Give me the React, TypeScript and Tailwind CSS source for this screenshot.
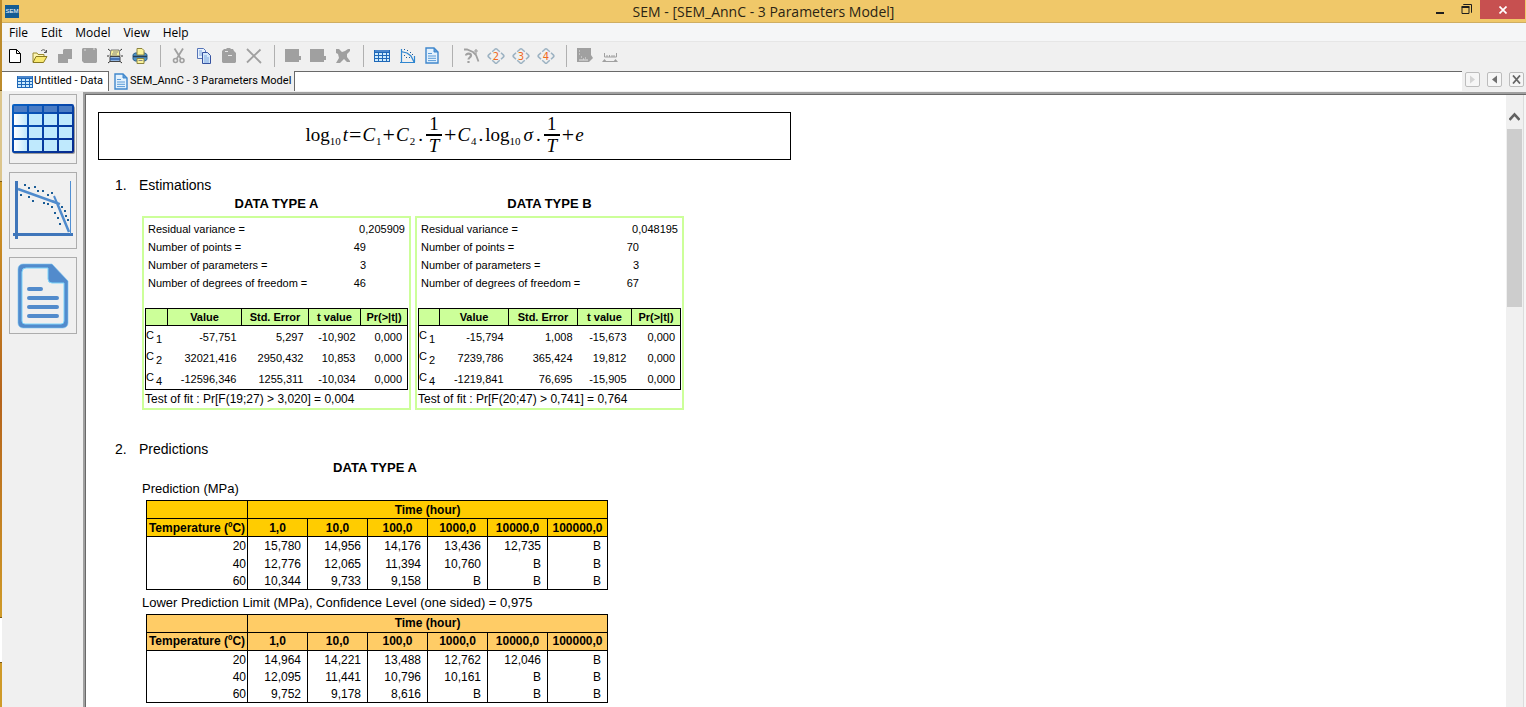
import type { ReactNode } from "react";

const GRAY = "#a0a0a0";

function Svg({ children, size = 18 }: { children: ReactNode; size?: number }) {
  return (
    <svg width={size} height={size} viewBox="0 0 18 18" fill="none" aria-hidden="true">
      {children}
    </svg>
  );
}

function GridIcon() {
  return (
    <svg width="16" height="12" viewBox="0 0 16 12" aria-hidden="true">
      <rect width="16" height="12" fill="#1f68b8" />
      <rect x="1" y="0" width="14" height="2" fill="#4a86cc" />
      {[1, 5, 9, 13].map((x) =>
        [3, 6, 9].map((y) => <rect key={`${x}-${y}`} x={x} y={y} width={x === 13 ? 2 : 3} height="2" fill="#cdeafc" />),
      )}
    </svg>
  );
}

function SheetIcon() {
  return (
    <svg width="14" height="17" viewBox="0 0 14 17" fill="none" aria-hidden="true">
      <path d="M1 1h8l4 4v11H1z" fill="#e4f2fd" stroke="#3f87cc" strokeWidth="1.4" />
      <path d="M9 1v4h4z" fill="#5b9bd8" stroke="#3f87cc" />
      <path d="M3 6.5h4M3 9h8M3 11.3h8M3 13.6h8" stroke="#5b9bd8" />
    </svg>
  );
}

function CurveIcon() {
  return (
    <Svg>
      <path d="M3.5 2v14M2 15.500h15M3 4.500l6 1.500 4 3 3 6M16.500 15V9" stroke="#2f86d0" strokeWidth="1.200" />
      <path d="M6 2.500h1M9 3.500h1M12 5.500h1M6 8.500h1M8 10.500h1M14 7.500h1M11 10.500h1" stroke="#1c5c9c" />
    </Svg>
  );
}

function DiamondIcon({ n }: { n: number }) {
  return (
    <Svg>
      <path
        d="M5.200 4.800 8 2.200q1-.8 2 0l2.800 2.600M14 5.800l2.500 2.300q.8.900 0 1.800L14 12.200M12.800 13.200 10 15.800q-1 .8-2 0l-2.800-2.600M4 12.200 1.500 9.900q-.8-.9 0-1.800L4 5.800"
        stroke="#9cb2c2"
        strokeWidth="1.500"
      />
      <text x="9" y="12.500" textAnchor="middle" className="font-['DejaVu_Sans'] text-[10px]" fill="#f06a20">
        {n}
      </text>
    </Svg>
  );
}

const newIcon = (
  <Svg>
    <path d="M3.500 2.500h7l4 4v9h-11z" fill="#fff" stroke="#000" />
    <path d="M10.500 2.500v4h4" stroke="#000" />
  </Svg>
);
const openIcon = (
  <Svg>
    <path d="M2 15V6h4l1 1.500h6V9" fill="#fdf6b4" stroke="#9a8a30" />
    <path d="M2 15.500 5 9.500h11l-3.500 6z" fill="#f8e870" stroke="#8a7a20" />
    <path d="M10 4c2-2 4-1.500 5 1m.5-2v2.500H13" stroke="#555" />
  </Svg>
);
const saveIcon = (
  <Svg>
    <path d="M8 2h8v10h-4v4H2V7h5V3z" fill={GRAY} />
  </Svg>
);
const saveAllIcon = (
  <Svg>
    <path d="M2 1h13l1 1v13l-1 1H3l-2-2V2z" fill={GRAY} />
    <path d="M3 3h2M12 2h2" stroke="#ddd" />
  </Svg>
);
const previewIcon = (
  <Svg>
    <path d="m2 2 2.500 2M16 2l-2.500 2M1 9h2M15 9h2M2 16l2.500-2M16 16l-2.500-2" stroke="#333" />
    <path d="M5 3h8l1 6H4z" fill="#fbf39a" stroke="#777" />
    <path d="M7 5h5M6 7h5" stroke="#888" />
    <path d="M4 9.500h10v5H4z" fill="#8fb4e0" stroke="#444" />
    <path d="M4 12h10" stroke="#2f5fa8" strokeWidth="1.500" />
  </Svg>
);
const printIcon = (
  <Svg>
    <path d="M2 7.500 4 6h10l2 1.500v5L14 14H4l-2-1.500z" fill="#4f94c8" stroke="#2a6088" />
    <path d="M6 1.500h5l2 2V8H6z" fill="#fbf39a" stroke="#8c8440" />
    <path d="M2 9.500h14" stroke="#263f58" strokeWidth="1.500" />
    <path d="M6 11.500h7v5H6z" fill="#fbf39a" stroke="#8c8440" />
    <path d="M7.500 13.500h4" stroke="#888" />
  </Svg>
);
const cutIcon = (
  <Svg>
    <path d="M4.500 1.500 11 12M13 1.500 6.500 12" stroke="#a0a0a0" strokeWidth="1.800" />
    <circle cx="5.500" cy="13.500" r="2" stroke="#a0a0a0" strokeWidth="1.600" />
    <circle cx="12" cy="13.500" r="2" stroke="#a0a0a0" strokeWidth="1.600" />
  </Svg>
);
const copyIcon = (
  <Svg>
    <path d="M2.500 1.500h6l2 2v8h-8z" fill="#e8f2fd" stroke="#5674b8" />
    <path d="M4 4h3M4 6h3M4 8h3" stroke="#7fa8e0" />
    <path d="M7.500 5.500h5l3 3v8h-8z" fill="#d4e8fb" stroke="#3552a0" />
    <path d="M9 9h3M9 11h5M9 13h5M9 15h5" stroke="#7fa8e0" />
  </Svg>
);
const pasteIcon = (
  <Svg>
    <path d="M4 2h2l1-1h3l1 1h2l1 2 2 2v9l-1 1H3l-1-1V4z" fill={GRAY} />
    <path d="M5 4.500h3M8 8.500h4" stroke="#e8e8e8" />
  </Svg>
);
const deleteIcon = (
  <Svg>
    <path d="m2 2 14 14M15.500 2.500 2 15.500" stroke="#a0a0a0" strokeWidth="1.800" />
  </Svg>
);
const blockIcon = (
  <Svg>
    <path d="M1 2h14v7h2v4h-2v2H1z" fill={GRAY} />
  </Svg>
);
const blockXIcon = (
  <Svg>
    <path d="M2 2h3l3 3 3-1 3-2h2v2l-3 3v3l3 4v1h-3l-3-3-4 4H2l3-5-1-4-2-1z" fill={GRAY} />
  </Svg>
);
const helpCurveIcon = (
  <Svg>
    <path d="M2 2.500h3l6 2.500 3 3 2.500 6.500" stroke={GRAY} strokeWidth="1.800" />
    <path d="M12 4h4M14 2v5" stroke={GRAY} strokeWidth="1.200" />
    <path d="M4 8.500c0-2.500 5-2.500 5 0 0 2-2.500 2-2.500 4M6.500 14v2" stroke={GRAY} strokeWidth="2.200" />
  </Svg>
);
const exportIcon = (
  <Svg>
    <path d="M1 1h14v7l2 3-4 4H1z" fill={GRAY} />
    <path d="M3 4h1M3 7h1M5 10h1M3 13h9M7 12h1M9 11h1" stroke="#e4e4e4" />
  </Svg>
);
const rulerIcon = (
  <Svg>
    <path d="M3.500 6v4h12V6M6 8v2M8.500 8v2M11 8v2M13 8v2" stroke={GRAY} />
    <path d="m1 15 2.500-3L6 15zM12 15l2.500-3 2.500 3z" fill={GRAY} />
    <path d="M4 14.500h10" stroke={GRAY} />
  </Svg>
);

type Tool = { label: string; icon: ReactNode };
const toolGroups: Tool[][] = [
  [
    { label: "New", icon: newIcon },
    { label: "Open", icon: openIcon },
    { label: "Save", icon: saveIcon },
    { label: "Save all", icon: saveAllIcon },
    { label: "Print preview", icon: previewIcon },
    { label: "Print", icon: printIcon },
  ],
  [
    { label: "Cut", icon: cutIcon },
    { label: "Copy", icon: copyIcon },
    { label: "Paste", icon: pasteIcon },
    { label: "Delete", icon: deleteIcon },
  ],
  [
    { label: "Insert row", icon: blockIcon },
    { label: "Insert column", icon: blockIcon },
    { label: "Remove", icon: blockXIcon },
  ],
  [
    { label: "Data", icon: <GridIcon /> },
    { label: "Graph", icon: <CurveIcon /> },
    { label: "Report", icon: <SheetIcon /> },
  ],
  [
    { label: "Choose model", icon: helpCurveIcon },
    { label: "2 parameters", icon: <DiamondIcon n={2} /> },
    { label: "3 parameters", icon: <DiamondIcon n={3} /> },
    { label: "4 parameters", icon: <DiamondIcon n={4} /> },
  ],
  [
    { label: "Export", icon: exportIcon },
    { label: "Scale", icon: rulerIcon },
  ],
];

function TitleBar() {
  return (
    <header className="grid h-[23px] shrink-0 grid-cols-[1fr_auto_1fr] border-b border-[#cfae62] bg-[#f0c869] pr-px">
      <div className="pt-[5px] pl-[3px]">
        <span className="block h-[13px] w-[14px] overflow-hidden bg-[#135c94] text-center font-['Liberation_Sans'] text-[6px] leading-[12px] text-white">
          SEM
        </span>
      </div>
      <h1 className="font-['Open_Sans',sans-serif] text-[14px] leading-[23px] text-[#2a2414]">
        SEM - [SEM_AnnC - 3 Parameters Model]
      </h1>
      <div className="flex items-start justify-end">
        <button aria-label="Minimize" className="flex h-[19px] w-[27px] items-center justify-center">
          <svg width="10" height="12" viewBox="0 0 10 12">
            <rect x="1" y="8" width="8" height="2" fill="#1e1e1e" />
          </svg>
        </button>
        <button aria-label="Restore" className="flex h-[19px] w-[27px] items-center justify-center">
          <svg width="11" height="11" viewBox="0 0 11 11" fill="none" stroke="#1e1e1e">
            <path d="M1 3.500h7v6H1z" />
            <path d="M.5 3h8" strokeWidth="2" />
            <path d="M2.500 1V.5h8v8H10" />
          </svg>
        </button>
        <button aria-label="Close" className="flex h-[19px] w-[45px] items-center justify-center bg-[#c75050]">
          <svg width="8" height="8" viewBox="0 0 8 8" stroke="#fff" strokeWidth="1.700">
            <path d="m.5.5 7 7M7.500.5l-7 7" />
          </svg>
        </button>
      </div>
    </header>
  );
}

function MenuBar() {
  return (
    <nav className="flex h-[19px] shrink-0 items-center gap-[13px] border-b border-[#e6e6e6] bg-[#f5f6f7] pt-px pl-[7px] font-['Open_Sans',sans-serif] text-[12px] text-black">
      {["File", "Edit", "Model", "View", "Help"].map((m) => (
        <button key={m}>{m}</button>
      ))}
    </nav>
  );
}

function ToolBar() {
  return (
    <div role="toolbar" className="flex h-[29px] shrink-0 items-center pb-[2px]">
      {toolGroups.map((group, i) => (
        <div key={i} className="flex items-center">
          {i > 0 && <span className="mr-[5px] ml-2 h-[22px] w-px bg-[#b0b0b0]" />}
          {group.map((t) => (
            <button key={t.label} aria-label={t.label} className="flex h-6 w-[25px] items-center justify-center">
              {t.icon}
            </button>
          ))}
        </div>
      ))}
    </div>
  );
}

function TabButton({ label, children }: { label: string; children: ReactNode }) {
  return (
    <button
      aria-label={label}
      className="flex size-[15px] items-center justify-center rounded-xs border border-[#bcbcbc] bg-[#f6f6f6]"
    >
      <svg width="9" height="9" viewBox="0 0 9 9" fill="none">
        {children}
      </svg>
    </button>
  );
}

function TabStrip() {
  return (
    <div className="flex h-[21px] shrink-0 font-['Roboto',sans-serif] text-[11px] text-black">
      <button className="mb-px flex items-center gap-px border-t border-r border-[#696969] bg-white pr-[5px] pl-[15px] whitespace-nowrap">
        <GridIcon />
        Untitled - Data
      </button>
      <button className="mb-px flex items-center gap-[2px] border-r border-[#696969] pr-[3px] pl-[5px] whitespace-nowrap">
        <SheetIcon />
        SEM_AnnC - 3 Parameters Model
      </button>
      <div className="mb-px flex-1 border-t border-[#696969] bg-white" />
      <div className="flex gap-[7px] pt-px pr-[2px] pl-[3px]">
        <TabButton label="Next tab">
          <path d="m2 .5 5 4-5 4z" fill="#d4d4d4" />
        </TabButton>
        <TabButton label="Previous tab">
          <path d="m7 .5-5 4 5 4z" fill="#707070" />
        </TabButton>
        <TabButton label="Close tab">
          <path d="m1 .5 7 8M8 .5l-7 8" stroke="#666" strokeWidth="1.800" />
        </TabButton>
      </div>
    </div>
  );
}

function BigGrid() {
  return (
    <svg width="64" height="52" viewBox="0 0 64 52" aria-hidden="true">
      <defs>
        <linearGradient id="frame" x1="0" y1="0" x2="1" y2="1">
          <stop offset="0" stopColor="#0a62c4" />
          <stop offset="1" stopColor="#04268c" />
        </linearGradient>
        <linearGradient id="cell" x1="0" y1="0" x2="1" y2="0">
          <stop offset="0" stopColor="#fff" />
          <stop offset="1" stopColor="#bfe9fd" />
        </linearGradient>
      </defs>
      <rect x="2" y="3" width="62" height="48" rx="2" fill="#9a9a9a" />
      <rect x="1" y="1" width="62" height="49" rx="2" fill="url(#frame)" />
      {[3, 18, 33, 48].map((x, c) => (
        <g key={x}>
          <rect x={x} y="3" width="13" height="6" fill="#4a7cc4" />
          {[11, 24, 37].map((y) => (
            <rect key={y} x={x} y={y} width="13" height="11" fill={c === 0 ? "url(#cell)" : "#bfe9fd"} />
          ))}
        </g>
      ))}
    </svg>
  );
}

function BigCurve() {
  const dots = [
    [11, 3], [15, 6], [21, 5], [24, 9], [29, 9], [7, 13], [15, 15], [19, 19], [34, 13], [38, 11], [30, 21], [34, 22],
    [38, 25], [48, 25], [51, 29], [41, 31], [52, 34], [44, 36], [54, 38], [46, 42],
  ];
  return (
    <svg width="60" height="60" viewBox="0 0 60 60" fill="none" aria-hidden="true">
      <path d="M3.500 0v58" stroke="#3f76ba" strokeWidth="3" />
      <path d="M0 53.500h60" stroke="#3f76ba" strokeWidth="3" />
      <path d="M57.500 0v53" stroke="#4f8fd4" />
      <path d="M5 8 44 22 56 51" stroke="#4f8bcd" strokeWidth="2.500" />
      <path d="M41 15l3 7M39 20l8 3" stroke="#4f8bcd" strokeWidth="2" />
      {dots.map(([x, y]) => (
        <rect key={`${x}-${y}`} x={x} y={y} width="2" height="2" fill="#1a5c96" />
      ))}
    </svg>
  );
}

function BigSheet() {
  return (
    <svg width="52" height="66" viewBox="0 0 52 66" fill="none" aria-hidden="true">
      <path d="M6 1h29l16 17v42a5 5 0 0 1-5 5H6a5 5 0 0 1-5-5V6a5 5 0 0 1 5-5z" fill="#528bcc" stroke="#7cc6f4" strokeWidth=".6" />
      <path d="M9 5h22v11a4 4 0 0 0 4 4h12v38a3 3 0 0 1-3 3H8a3 3 0 0 1-3-3V9a4 4 0 0 1 4-4z" fill="#efefef" stroke="#7cd4fb" />
      <path d="M12 26h12M12 35h28M12 44h28M12 53h28" stroke="#528bcc" strokeWidth="4" strokeLinecap="round" />
    </svg>
  );
}

function SideBar() {
  const base = "flex w-[68px] items-center justify-center border border-[#adadad]";
  return (
    <aside className="flex w-[81px] shrink-0 flex-col gap-2 pt-[2px] pl-[7px]">
      <button aria-label="Data view" className={`${base} h-[70px]`}>
        <BigGrid />
      </button>
      <button aria-label="Graph view" className={`${base} h-[77px]`}>
        <BigCurve />
      </button>
      <button aria-label="Report view" className={`${base} h-[77px]`}>
        <BigSheet />
      </button>
    </aside>
  );
}

function Sub({ children }: { children: ReactNode }) {
  return <span className="mt-3 text-[11px] leading-3">{children}</span>;
}

function Op({ children }: { children: ReactNode }) {
  return <span className="mx-px text-[22px]">{children}</span>;
}

function Symbol({ children }: { children: ReactNode }) {
  return <i className="mr-px">{children}</i>;
}

function Fraction() {
  return (
    <span className="mr-px ml-[3px] flex w-4 flex-col items-center">
      <span className="leading-5">1</span>
      <span className="h-[2px] w-full bg-black" />
      <span className="leading-5 italic">T</span>
    </span>
  );
}

function Equation() {
  return (
    <div className="flex h-12 w-[693px] items-center justify-center border border-black pb-[2px] font-['Liberation_Serif',serif] text-[19px] leading-5">
      <span>log</span>
      <Sub>10</Sub>
      <i className="ml-[2px]">t</i>
      <Op>=</Op>
      <Symbol>C</Symbol>
      <Sub>1</Sub>
      <Op>+</Op>
      <Symbol>C</Symbol>
      <Sub>2</Sub>
      <span className="ml-[3px]">.</span>
      <Fraction />
      <Op>+</Op>
      <Symbol>C</Symbol>
      <Sub>4</Sub>
      <span className="mx-[2px]">.</span>
      <span>log</span>
      <Sub>10</Sub>
      <i className="ml-[3px]">σ</i>
      <span className="ml-[3px]">.</span>
      <Fraction />
      <Op>+</Op>
      <i>e</i>
    </div>
  );
}

type Estimation = {
  name: string;
  summary: [string, string][];
  cols: string[];
  rows: string[][];
  test: string;
};

const estimations: Estimation[] = [
  {
    name: "DATA TYPE A",
    summary: [
      ["Residual variance =", "0,205909"],
      ["Number of points =", "49"],
      ["Number of parameters =", "3"],
      ["Number of degrees of freedom =", "46"],
    ],
    cols: ["w-[22px]", "w-[74px]", "w-[67px]", "w-[52px]", "w-[47px]"],
    rows: [
      ["1", "-57,751", "5,297", "-10,902", "0,000"],
      ["2", "32021,416", "2950,432", "10,853", "0,000"],
      ["4", "-12596,346", "1255,311", "-10,034", "0,000"],
    ],
    test: "Test of fit : Pr[F(19;27) > 3,020] = 0,004",
  },
  {
    name: "DATA TYPE B",
    summary: [
      ["Residual variance =", "0,048195"],
      ["Number of points =", "70"],
      ["Number of parameters =", "3"],
      ["Number of degrees of freedom =", "67"],
    ],
    cols: ["w-[21px]", "w-[69px]", "w-[69px]", "w-[54px]", "w-[49px]"],
    rows: [
      ["1", "-15,794", "1,008", "-15,673", "0,000"],
      ["2", "7239,786", "365,424", "19,812", "0,000"],
      ["4", "-1219,841", "76,695", "-15,905", "0,000"],
    ],
    test: "Test of fit : Pr[F(20;47) > 0,741] = 0,764",
  },
];

function EstimationCard({ data }: { data: Estimation }) {
  return (
    <section className="w-[269px]">
      <h3 className="mb-1 text-center text-[13px] leading-4 font-bold">{data.name}</h3>
      <div className="border-2 border-[#ccff99] pt-[2px] pr-[2px] pl-px text-[11px]">
        <table className="mb-4 w-full">
          <tbody>
            {data.summary.map(([label, value], i) => (
              <tr key={label} className="h-[18px]">
                <th scope="row" className="p-0 pl-[3px] text-left font-normal whitespace-nowrap">
                  {label}
                </th>
                <td className={i === 0 ? "p-0 pr-[2px] text-right" : "p-0 pr-[41px] text-right"}>{value}</td>
              </tr>
            ))}
          </tbody>
        </table>
        <table className="w-full table-fixed border-collapse border border-black">
          <colgroup>
            {data.cols.map((c, i) => (
              <col key={i} className={c} />
            ))}
          </colgroup>
          <thead>
            <tr className="h-[17px] bg-[#ccff99]">
              {["", "Value", "Std. Error", "t value", "Pr(>|t|)"].map((h, i) => (
                <th key={i} className="border border-black p-0 leading-4 whitespace-nowrap">
                  {h}
                </th>
              ))}
            </tr>
          </thead>
          <tbody>
            {data.rows.map(([n, ...values]) => (
              <tr key={n} className="h-[21px] first:h-[22px]">
                <th scope="row" className="p-0 font-normal">
                  <span className="flex gap-[2px] leading-3">
                    <span className="pb-1">C</span>
                    <span className="pt-1">{n}</span>
                  </span>
                </th>
                {values.map((v, i) => (
                  <td key={i} className="p-0 pt-px pr-[5px] text-right">
                    {v}
                  </td>
                ))}
              </tr>
            ))}
          </tbody>
        </table>
        <p className="text-[12px] leading-[18px]">{data.test}</p>
      </div>
    </section>
  );
}

const times = ["1,0", "10,0", "100,0", "1000,0", "10000,0", "100000,0"];

function PredictionTable({ title, tone, rows }: { title: string; tone: string; rows: string[][] }) {
  return (
    <div>
      <p className="pt-[5px] text-[13px] leading-4">{title}</p>
      <table className="mt-[3px] ml-1 w-[462px] table-fixed border-collapse border border-black text-[12px] leading-4">
        <colgroup>
          <col className="w-[101px]" />
          {times.map((t) => (
            <col key={t} className="w-[60px]" />
          ))}
        </colgroup>
        <thead className={tone}>
          <tr className="h-[18px]">
            <th className="border border-black p-0" />
            <th colSpan={6} className="border border-black p-0">
              Time (hour)
            </th>
          </tr>
          <tr className="h-[18px]">
            <th className="border border-black p-0 whitespace-nowrap">Temperature (ºC)</th>
            {times.map((t) => (
              <th key={t} className="border border-black p-0">
                {t}
              </th>
            ))}
          </tr>
        </thead>
        <tbody>
          {rows.map(([temp, ...values]) => (
            <tr key={temp} className="h-[17px] first:h-[18px]">
              <th scope="row" className="border-x border-black p-0 pt-px pr-px text-right font-normal">
                {temp}
              </th>
              {values.map((v, i) => (
                <td key={i} className="border-x border-black p-0 pt-px pr-[6px] text-right">
                  {v}
                </td>
              ))}
            </tr>
          ))}
        </tbody>
      </table>
    </div>
  );
}

function SectionTitle({ n, children }: { n: number; children: ReactNode }) {
  return (
    <h2 className="flex pl-[17px] text-[14px] leading-4">
      <span className="w-6">{n}.</span>
      {children}
    </h2>
  );
}

function Report() {
  return (
    <article className="flex-1 overflow-hidden bg-white pt-[17px] pl-3 font-['Liberation_Sans',sans-serif] text-black">
      <Equation />
      <div className="pt-[17px]">
        <SectionTitle n={1}>Estimations</SectionTitle>
        <div className="flex gap-1 pt-[3px] pl-11">
          {estimations.map((e) => (
            <EstimationCard key={e.name} data={e} />
          ))}
        </div>
      </div>
      <div className="pt-[31px]">
        <SectionTitle n={2}>Predictions</SectionTitle>
        <div className="w-[510px] pt-[3px] pl-11">
          <h3 className="text-center text-[13px] leading-4 font-bold">DATA TYPE A</h3>
          <PredictionTable
            title="Prediction (MPa)"
            tone="bg-[#ffcc00]"
            rows={[
              ["20", "15,780", "14,956", "14,176", "13,436", "12,735", "B"],
              ["40", "12,776", "12,065", "11,394", "10,760", "B", "B"],
              ["60", "10,344", "9,733", "9,158", "B", "B", "B"],
            ]}
          />
          <PredictionTable
            title="Lower Prediction Limit (MPa), Confidence Level (one sided) = 0,975"
            tone="bg-[#ffcc66]"
            rows={[
              ["20", "14,964", "14,221", "13,488", "12,762", "12,046", "B"],
              ["40", "12,095", "11,441", "10,796", "10,161", "B", "B"],
              ["60", "9,752", "9,178", "8,616", "B", "B", "B"],
            ]}
          />
        </div>
      </div>
    </article>
  );
}

function ScrollBar() {
  return (
    <div className="flex w-[17px] shrink-0 flex-col items-center bg-[#f0f0f0]">
      <button aria-label="Scroll up" className="flex h-[34px] w-full items-end justify-center pb-[7px]">
        <svg width="11" height="10" viewBox="0 0 11 10" fill="none" stroke="#606060" strokeWidth="2.600">
          <path d="m.5 8 5-5.500 5 5.500" />
        </svg>
      </button>
      <div className="h-[178px] w-[15px] bg-[#cdcdcd]" />
    </div>
  );
}

export default function App() {
  return (
    <div className="flex h-screen overflow-hidden bg-[#f0f0f0]">
      <div className="flex w-[2px] shrink-0 flex-col">
        <div className="h-[90px] bg-[#bd8c2c]" />
        <div className="h-[92px] border-y border-[#7a5a18] bg-[#dcc58c]" />
        <div className="flex-1 bg-linear-to-b from-[#cf9a28] via-[#b5641c] to-[#cf9a28]" />
        <div className="h-[46px] border-y border-[#7a5a18] bg-white" />
        <div className="h-[44px] bg-[#cf9a28]" />
      </div>
      <div className="flex min-w-0 flex-1 flex-col">
        <TitleBar />
        <MenuBar />
        <ToolBar />
        <TabStrip />
        <main className="flex min-h-0 flex-1">
          <SideBar />
          <div className="flex min-w-0 flex-1 border-t-2 border-l-2 border-[#a0a0a0]">
            <div className="flex min-w-0 flex-1 border-t border-l border-[#696969]">
              <Report />
              <ScrollBar />
              <div className="w-[3px] shrink-0 border-l border-[#dcdcdc] bg-[#f6f6f6]" />
            </div>
          </div>
        </main>
      </div>
    </div>
  );
}
